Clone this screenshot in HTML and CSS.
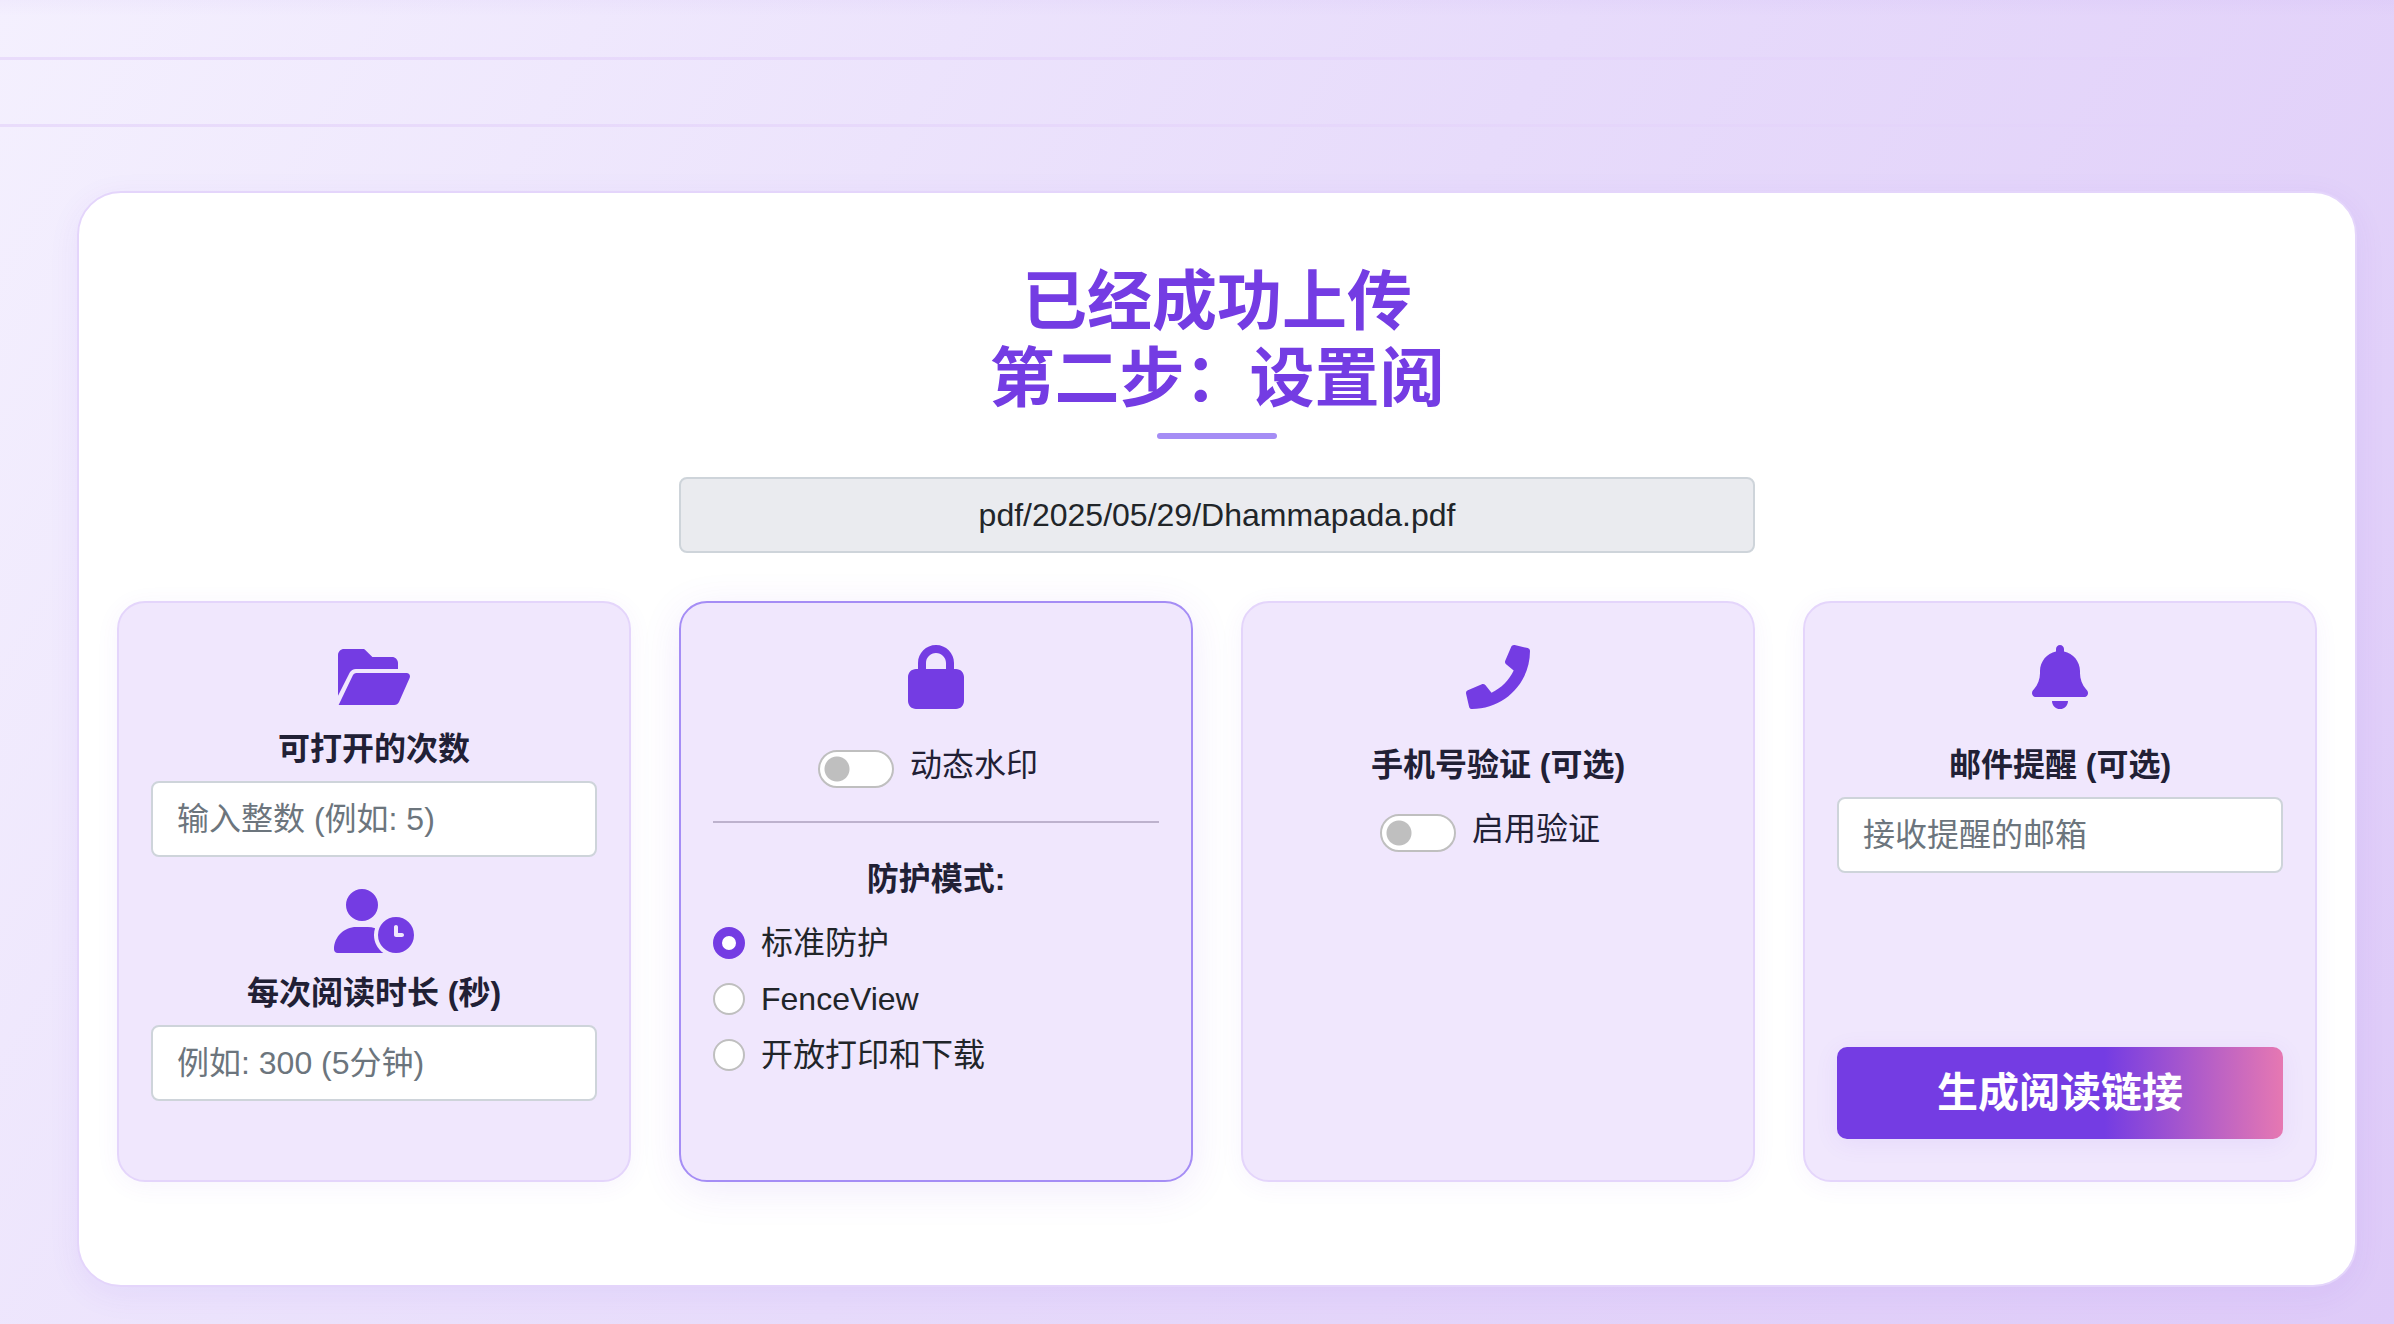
FILE: index.html
```html
<!DOCTYPE html>
<html lang="zh-CN">
<head>
<meta charset="utf-8">
<title>设置阅读权限</title>
<meta name="viewport" content="width=device-width, initial-scale=1">
<link rel="stylesheet" href="styles.css">
</head>
<body>
<div class="rules" aria-hidden="true">
  <div class="rule"></div>
  <div class="rule"></div>
</div>
<main class="panel">
  <h1 class="title">已经成功上传<br>第二步：设置阅</h1>
  <input class="field file-path" type="text" value="pdf/2025/05/29/Dhammapada.pdf" aria-label="文件" readonly>
  <form class="cards">
    <section class="card">
      <svg class="icon" viewBox="0 0 576 512" aria-hidden="true"><path d="M0 405V80C0 53.500 21.500 32 48 32H205C210 32 213 34 216 37L275 96H432c26.500 0 48 21.500 48 48v48H144c-22.800 0-41 11-51 30zM5 480L118 244c6-12 15-20 30-20H548c24 0 34 22 24 42L488 456c-8 15-20 24-38 24z"/></svg>
      <label class="label" for="opens">可打开的次数</label>
      <input class="field" id="opens" type="text" placeholder="输入整数 (例如: 5)">
      <svg class="icon icon-second" viewBox="0 0 640 512" aria-hidden="true"><path d="M224 0a128 128 0 1 1 0 256A128 128 0 1 1 224 0zM178.300 304h91.400c20.600 0 40.400 3.500 58.800 9.900C323 331 320 349.100 320 368c0 59.500 29.500 112.100 74.800 144H29.700C13.300 512 0 498.700 0 482.300C0 383.800 79.800 304 178.300 304zM352 368a144 144 0 1 1 288 0 144 144 0 1 1-288 0zm144-80c-8.800 0-16 7.200-16 16v64c0 8.800 7.200 16 16 16h48c8.800 0 16-7.200 16-16s-7.200-16-16-16H512V304c0-8.800-7.200-16-16-16z"/></svg>
      <label class="label" for="seconds">每次阅读时长 (秒)</label>
      <input class="field" id="seconds" type="text" placeholder="例如: 300 (5分钟)">
    </section>
    <section class="card card-active">
      <svg class="icon" viewBox="0 0 448 512" aria-hidden="true"><path d="M144 144v48H304V144c0-44.200-35.800-80-80-80s-80 35.800-80 80zM80 192V144C80 64.500 144.500 0 224 0s144 64.500 144 144v48h16c35.300 0 64 28.700 64 64V448c0 35.300-28.700 64-64 64H64c-35.300 0-64-28.700-64-64V256c0-35.300 28.700-64 64-64H80z"/></svg>
      <div class="switch-row switch-lead"><input class="switch" id="watermark" type="checkbox" role="switch"><label for="watermark">动态水印</label></div>
      <hr class="divider">
      <fieldset class="modes">
        <legend class="label">防护模式:</legend>
        <div class="mode"><input class="radio" id="m1" type="radio" name="mode" checked><label for="m1">标准防护</label></div>
        <div class="mode"><input class="radio" id="m2" type="radio" name="mode"><label for="m2">FenceView</label></div>
        <div class="mode"><input class="radio" id="m3" type="radio" name="mode"><label for="m3">开放打印和下载</label></div>
      </fieldset>
    </section>
    <section class="card">
      <svg class="icon" viewBox="0 0 512 512" aria-hidden="true"><path d="M493.400 24.600l-104-24c-11.300-2.600-22.900 3.300-27.500 13.900l-48 112c-4.200 9.800-1.400 21.300 6.900 28l60.600 49.600c-36 76.700-98.900 140.500-177.200 177.200l-49.600-60.600c-6.800-8.300-18.200-11.100-28-6.900l-112 48C3.900 366.500-2 378.100.6 389.400l24 104C27.100 504.200 36.700 512 48 512c256.100 0 464-207.500 464-464 0-11.200-7.700-20.900-18.600-23.400z"/></svg>
      <h2 class="label label-spaced">手机号验证 (可选)</h2>
      <div class="switch-row switch-below"><input class="switch" id="phone" type="checkbox" role="switch"><label for="phone">启用验证</label></div>
    </section>
    <section class="card">
      <svg class="icon" viewBox="0 0 448 512" aria-hidden="true"><path d="M224 0c-17.700 0-32 14.300-32 32V51.200C119 66 64 130.600 64 208v18.800c0 47-17.300 92.400-48.500 127.600l-7.400 8.300c-8.400 9.400-10.400 22.900-5.300 34.400S19.400 416 32 416H416c12.600 0 24-7.400 29.200-18.900s3.100-25-5.300-34.400l-7.400-8.300C401.300 319.200 384 273.900 384 226.800V208c0-77.400-55-142-128-156.800V32c0-17.700-14.300-32-32-32zm45.300 493.300c12-12 18.700-28.300 18.700-45.300H224 160c0 17 6.700 33.300 18.700 45.300s28.300 18.700 45.300 18.700s33.300-6.700 45.300-18.700z"/></svg>
      <label class="label label-spaced" for="email">邮件提醒 (可选)</label>
      <input class="field" id="email" type="email" placeholder="接收提醒的邮箱">
      <button class="submit" type="submit">生成阅读链接</button>
    </section>
  </form>
</main>
</body>
</html>
```

FILE: styles.css
```css
* { box-sizing: border-box; }

body {
  margin: 0;
  min-height: 100vh;
  background: linear-gradient(120deg, #f4f0fe 0%, #e7dbfb 50%, #decaf8 100%);
  color: #212529;
  font: 32px/48px "Liberation Sans", "Noto Sans CJK SC", sans-serif;
}

.rules {
  height: 191px;
  padding-top: 57px;
  display: flex;
  flex-direction: column;
  gap: 64px;
  background: linear-gradient(180deg, rgba(116, 60, 227, 0.03), transparent 16px);
}

.rule {
  width: 92%;
  height: 3px;
  background: linear-gradient(90deg, #e9dcfb, #e6d7fb 60%, #e3d3fa);
}

.panel {
  margin: 0 37px 37px 77px;
  padding: 70px 38px 103px;
  display: flex;
  flex-direction: column;
  align-items: center;
  background: #fff;
  border: 2px solid #e4d5fb;
  border-radius: 44px;
  box-shadow: 0 8px 32px rgba(116, 60, 227, 0.07);
}

.title {
  margin: 0 0 38px;
  display: flex;
  flex-direction: column;
  align-items: center;
  color: #743ce3;
  font-size: 65px;
  line-height: 77px;
  font-weight: 700;
  text-align: center;
}

.title::after {
  content: "";
  width: 120px;
  height: 6px;
  margin-top: 16px;
  border-radius: 3px;
  background: #a58df5;
}

.field {
  width: 100%;
  height: 76px;
  padding: 0 24px;
  border: 2px solid #ced4da;
  border-radius: 8px;
  background: #fff;
  color: #212529;
  font: inherit;
}

.field::placeholder { color: #6c757d; opacity: 1; }

.file-path {
  width: calc(50% - 24px);
  background: #eaebef;
  text-align: center;
}

.cards {
  width: 100%;
  margin-top: 48px;
  display: grid;
  grid-template-columns: repeat(4, 1fr);
  gap: 48px;
}

.card {
  min-height: 581px;
  padding: 42px 32px 41px;
  display: flex;
  flex-direction: column;
  align-items: center;
  background: #f0e7fd;
  border: 2px solid #e4d5fb;
  border-radius: 28px;
  box-shadow: 0 4px 24px rgba(116, 60, 227, 0.06);
}

.card-active {
  border-color: #a58df5;
  box-shadow: 0 8px 40px rgba(116, 60, 227, 0.1);
}

.icon { height: 64px; fill: #743ce3; flex: none; }
.icon-second { margin-top: 32px; }

.label {
  margin: 16px 0 8px;
  padding: 0;
  color: #212035;
  font-size: 32px;
  line-height: 48px;
  font-weight: 700;
  text-align: center;
}

.label-spaced { margin-top: 32px; }

.switch-row {
  display: flex;
  align-items: flex-start;
  gap: 16px;
  padding-right: 16px;
  color: #212035;
}

.switch-lead { margin-top: 32px; }
.switch-below { margin-top: 8px; }

.switch {
  appearance: none;
  width: 76px;
  height: 38px;
  margin: 9px 0 0;
  border: 2px solid #bfbfbf;
  border-radius: 19px;
  background: #fff radial-gradient(circle at 17px 50%, #bfbfbf 12px, transparent 13px);
}

.divider {
  width: 100%;
  margin: 32px 0;
  border: 0;
  border-top: 2px solid #bdb2cd;
}

.modes { width: 100%; margin: 0; padding: 0; border: 0; }
.modes .label { width: 100%; margin: 0 0 16px; }

.mode {
  display: flex;
  align-items: center;
  gap: 16px;
  margin-bottom: 8px;
}

.radio {
  appearance: none;
  width: 32px;
  height: 32px;
  margin: 0;
  border: 2px solid #bfbfbf;
  border-radius: 50%;
  background: #fff;
}

.radio:checked { border: 9px solid #743ce3; }

.submit {
  width: 100%;
  height: 92px;
  margin-top: auto;
  border: 0;
  border-radius: 10px;
  background: linear-gradient(90deg, #743ce3 60%, #e678b2 100%);
  color: #fff;
  font: inherit;
  font-size: 41px;
  font-weight: 700;
  box-shadow: 0 4px 24px rgba(116, 60, 227, 0.08);
}
```
